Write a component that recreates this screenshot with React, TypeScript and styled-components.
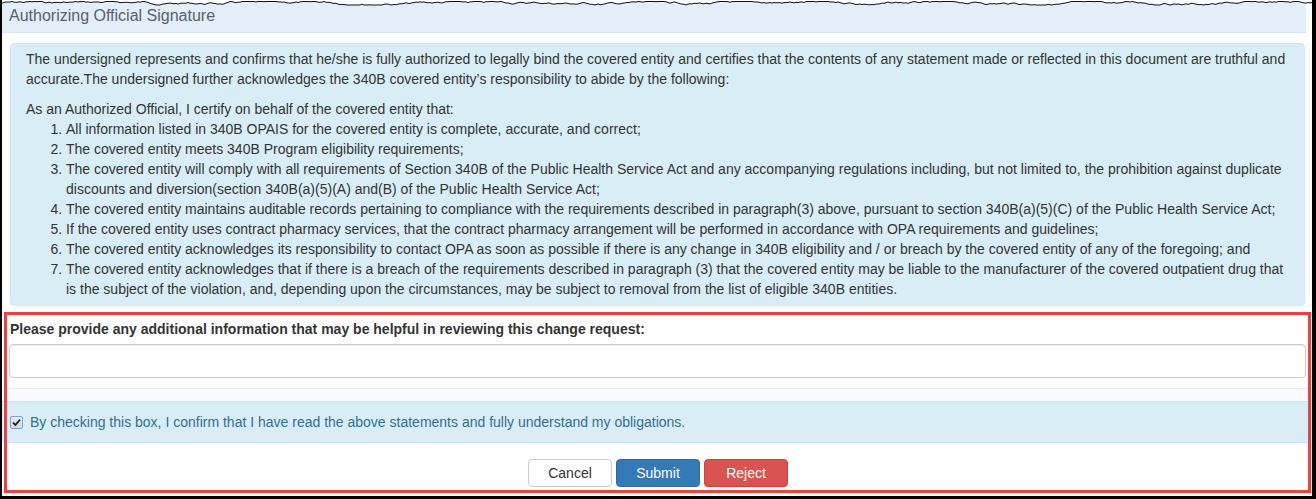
import React from "react";
import styled, { createGlobalStyle } from "styled-components";

const GlobalStyle = createGlobalStyle`
  html, body {
    margin: 0;
    padding: 0;
    background: #ffffff;
  }
  body {
    font-family: "Liberation Sans", Arial, sans-serif;
    font-size: 14px;
    color: #333333;
  }
`;

const items = [
  "All information listed in 340B OPAIS for the covered entity is complete, accurate, and correct;",
  "The covered entity meets 340B Program eligibility requirements;",
  "The covered entity will comply with all requirements of Section 340B of the Public Health Service Act and any accompanying regulations including, but not limited to, the prohibition against duplicate discounts and diversion(section 340B(a)(5)(A) and(B) of the Public Health Service Act;",
  "The covered entity maintains auditable records pertaining to compliance with the requirements described in paragraph(3) above, pursuant to section 340B(a)(5)(C) of the Public Health Service Act;",
  "If the covered entity uses contract pharmacy services, that the contract pharmacy arrangement will be performed in accordance with OPA requirements and guidelines;",
  "The covered entity acknowledges its responsibility to contact OPA as soon as possible if there is any change in 340B eligibility and / or breach by the covered entity of any of the foregoing; and",
  "The covered entity acknowledges that if there is a breach of the requirements described in paragraph (3) that the covered entity may be liable to the manufacturer of the covered outpatient drug that is the subject of the violation, and, depending upon the circumstances, may be subject to removal from the list of eligible 340B entities.",
];

// ragged "torn paper" line along the top of the screenshot
function tornPoints(width: number) {
  let seed = 7;
  const rand = () => {
    seed = (seed * 9301 + 49297) % 233280;
    return seed / 233280;
  };
  const pts: string[] = [];
  let y = 3;
  for (let x = 0; x <= width; x += 2) {
    y += (rand() - 0.5) * 1.6;
    if (y < 1.5) y = 1.5;
    if (y > 5) y = 5;
    pts.push(`${x},${y.toFixed(2)}`);
  }
  return pts;
}

function TornEdge() {
  const pts = tornPoints(1316);
  return (
    <TornSvg width="1316" height="7" viewBox="0 0 1316 7">
      <polygon points={`0,0 1316,0 ${pts.slice().reverse().join(" ")}`} fill="#ffffff" />
      <polyline points={pts.join(" ")} fill="none" stroke="#111" strokeWidth="1" />
    </TornSvg>
  );
}

function CheckMark() {
  return (
    <svg width="9" height="9" viewBox="0 0 9 9">
      <path d="M1 4.6 L3.4 7 L8 1.6" fill="none" stroke="#222" strokeWidth="1.8" />
    </svg>
  );
}

export default function App() {
  return (
    <>
      <GlobalStyle />
      <Frame>
        <TornEdge />
        <Panel>
          <PanelHeading>Authorizing Official Signature</PanelHeading>
          <PanelBody>
            <InfoAlert>
              <Intro>
                The undersigned represents and confirms that he/she is fully authorized to legally bind the covered
                entity and certifies that the contents of any statement made or reflected in this document are
                truthful and accurate.The undersigned further acknowledges the 340B covered entity’s responsibility
                to abide by the following:
              </Intro>
              <Lead>As an Authorized Official, I certify on behalf of the covered entity that:</Lead>
              <List>
                {items.map((item, index) => (
                  <li key={index}>{item}</li>
                ))}
              </List>
            </InfoAlert>
          </PanelBody>
        </Panel>
        <FormSection>
          <FieldLabel>Please provide any additional information that may be helpful in reviewing this change request:</FieldLabel>
          <TextInput />
        </FormSection>
        <Strip />
        <ConfirmBand>
          <CheckBox>
            <CheckMark />
          </CheckBox>
          <ConfirmText>
            By checking this box, I confirm that I have read the above statements and fully understand my obligations.
          </ConfirmText>
        </ConfirmBand>
        <ButtonRow>
          <ActionButton $variant="default">Cancel</ActionButton>
          <ActionButton $variant="primary">Submit</ActionButton>
          <ActionButton $variant="danger">Reject</ActionButton>
        </ButtonRow>
        <Highlight />
      </Frame>
    </>
  );
}

const Frame = styled.div`
  position: relative;
  box-sizing: border-box;
  width: 1316px;
  height: 499px;
  overflow: hidden;
  background: #ffffff;
  border-left: 2px solid #000;
  border-right: 4px solid #000;
  border-bottom: 3px solid #000;
`;

const TornSvg = styled.svg`
  position: absolute;
  top: 0;
  left: -2px;
  display: block;
`;

const Panel = styled.div`
  width: 1304px;
`;

const PanelHeading = styled.div`
  height: 32px;
  line-height: 32px;
  padding-left: 7px;
  background: #e4eef9;
  border-bottom: 1px solid #dde3ea;
  color: #56616d;
  font-size: 16px;
`;

const PanelBody = styled.div`
  padding: 10px 1px 0 8px;
`;

const InfoAlert = styled.div`
  background: #d9edf7;
  border: 1px solid #d1e8f4;
  border-radius: 4px;
  padding: 5px 15px 6px 15px;
  line-height: 20px;
  color: #333;
`;

const Intro = styled.p`
  margin: 0 0 10px 0;
`;

const Lead = styled.p`
  margin: 0;
`;

const List = styled.ol`
  margin: 0;
  padding-left: 40px;
`;

const FormSection = styled.div`
  padding: 13px 6px 10px 7px;
`;

const FieldLabel = styled.div`
  font-weight: bold;
  line-height: 20px;
  color: #333;
  padding-left: 1px;
`;

const TextInput = styled.input`
  display: block;
  box-sizing: border-box;
  width: 100%;
  height: 34px;
  margin-top: 5px;
  border: 1px solid #cccccc;
  border-radius: 4px;
  box-shadow: inset 0 1px 1px rgba(0, 0, 0, 0.075);
  background: #fff;
`;

const Strip = styled.div`
  height: 12px;
  margin-right: 4px;
  border-top: 1px solid #e3e5e8;
  background: #f8fafd;
`;

const ConfirmBand = styled.div`
  display: flex;
  align-items: center;
  height: 40px;
  margin-right: 4px;
  padding-left: 8px;
  background: #d9edf7;
  border-top: 1px solid #c4e5f1;
  border-bottom: 1px solid #c4e5f1;
`;

const CheckBox = styled.span`
  box-sizing: border-box;
  display: flex;
  align-items: center;
  justify-content: center;
  width: 13px;
  height: 13px;
  border: 1px solid #6ea7e6;
  border-radius: 2px;
  background: linear-gradient(#ececec, #d6d6d6);
`;

const ConfirmText = styled.span`
  margin-left: 7px;
  color: #31708f;
  line-height: 20px;
`;

const ButtonRow = styled.div`
  display: flex;
  justify-content: center;
  gap: 4px;
  padding-top: 16px;
  padding-left: 2px;
`;

const ActionButton = styled.button<{ $variant: "default" | "primary" | "danger" }>`
  box-sizing: border-box;
  width: 84px;
  height: 28px;
  border-radius: 4px;
  font-family: "Liberation Sans", Arial, sans-serif;
  font-size: 14px;
  cursor: pointer;
  border: 1px solid
    ${(p) => (p.$variant === "primary" ? "#2e6da4" : p.$variant === "danger" ? "#d43f3a" : "#cccccc")};
  background: ${(p) => (p.$variant === "primary" ? "#337ab7" : p.$variant === "danger" ? "#d9534f" : "#ffffff")};
  color: ${(p) => (p.$variant === "default" ? "#333333" : "#ffffff")};
`;

const Highlight = styled.div`
  position: absolute;
  left: 2px;
  top: 312px;
  width: 1307px;
  height: 181px;
  box-sizing: border-box;
  border: 3px solid #e4433f;
  pointer-events: none;
`;
